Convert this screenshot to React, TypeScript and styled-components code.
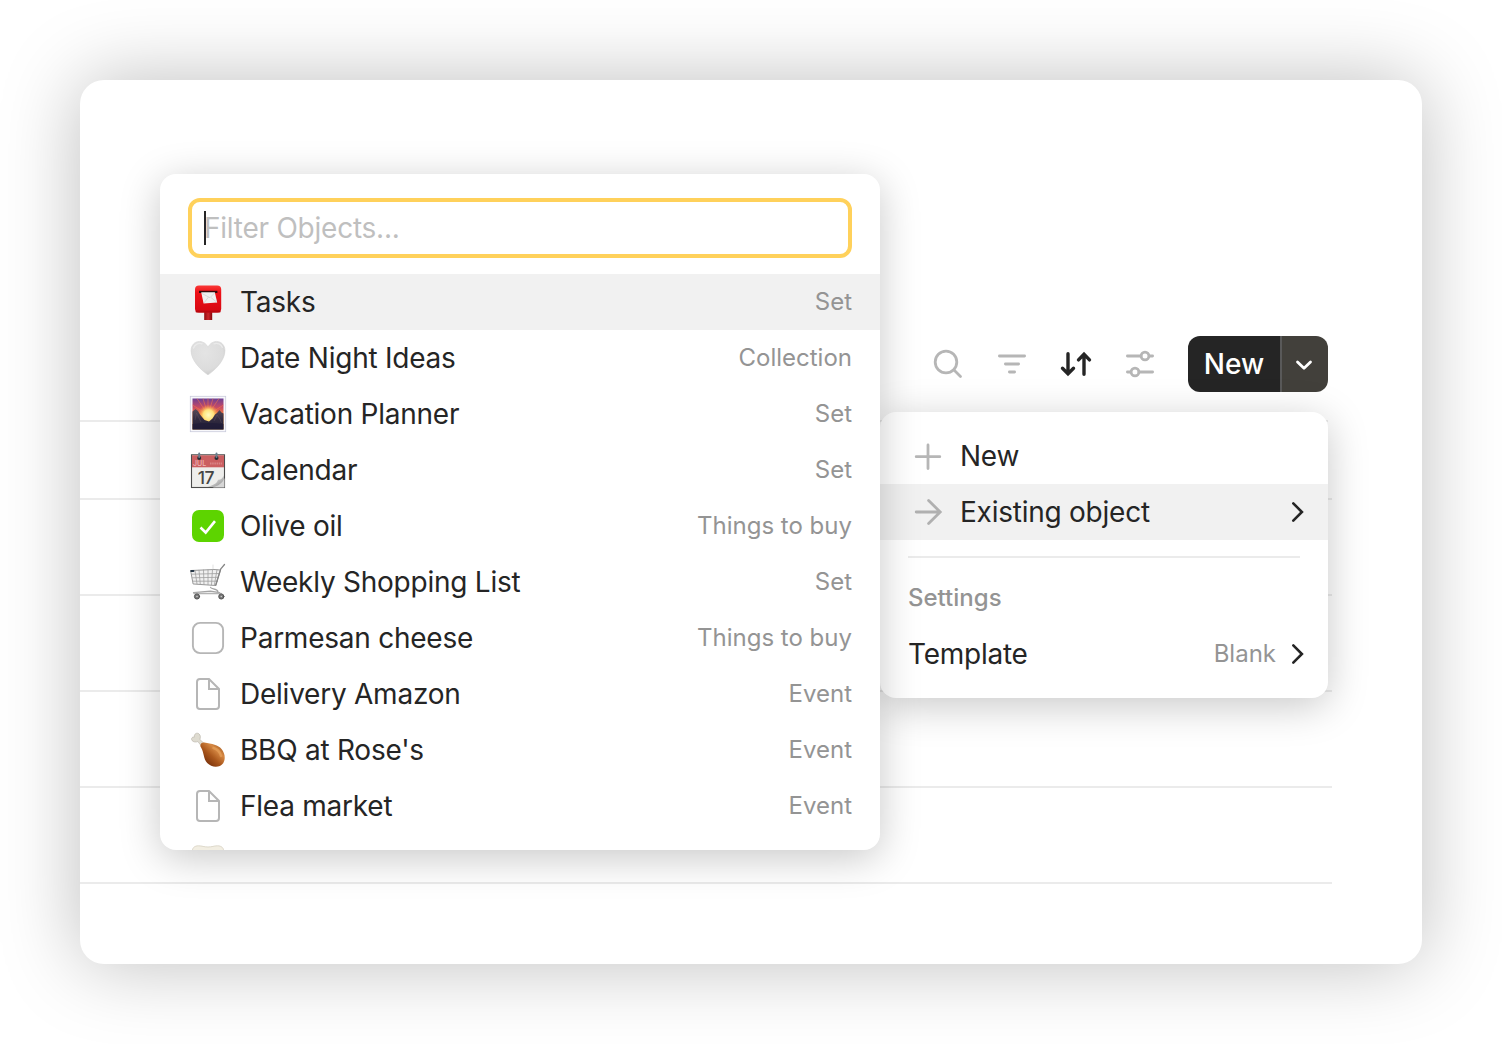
import React from 'react';
import styled, { createGlobalStyle } from 'styled-components';

const Global = createGlobalStyle`
  *, *::before, *::after { box-sizing: border-box; }
  body { margin: 0; background: #fff; }
`;

const Page = styled.div`
  height: 1044px;
  padding: 80px;
  overflow: hidden;
  font-family: Inter, "Liberation Sans", sans-serif;
  font-size: 28px;
  color: #252525;
`;

const Card = styled.main`
  position: relative;
  height: 884px;
  padding-top: 256px;
  border-radius: 24px;
  background: #fff;
  box-shadow: 0 0 80px rgba(0, 0, 0, 0.26);
`;

const Toolbar = styled.div`
  display: flex;
  justify-content: flex-end;
  align-items: center;
  height: 56px;
  padding-right: 94px;
`;

const Tools = styled.div`
  display: flex;
  gap: 24px;
  margin-right: 28px;
`;

const ToolIcon = styled.svg<{ $active?: boolean }>`
  display: block;
  width: 40px;
  height: 40px;
  fill: none;
  stroke: ${(p) => (p.$active ? '#252525' : '#b6b6b6')};
  stroke-width: ${(p) => (p.$active ? 3.4 : 2.8)};
  stroke-linecap: round;
`;

const SplitButton = styled.div`
  display: flex;
  width: 140px;
  height: 56px;
  border-radius: 12px;
  overflow: hidden;
`;

const NewButton = styled.button`
  flex: 1;
  padding: 0;
  border: 0;
  background: #252525;
  color: #fff;
  font: 500 28px/56px Inter, "Liberation Sans", sans-serif;
`;

const ArrowButton = styled.button`
  display: flex;
  align-items: center;
  justify-content: center;
  width: 48px;
  padding: 0 2px 0 0;
  border: 0;
  border-left: 2px solid #595959;
  background: #42403b;
`;

const Grid = styled.div`
  margin: 28px 90px 0 0;
`;

const GridRow = styled.div<{ $height: number; $inset?: number }>`
  height: ${(p) => p.$height}px;
  margin-right: ${(p) => p.$inset ?? 0}px;
  border-top: 2px solid #ebebeb;
`;

const Menu = styled.div`
  position: absolute;
  border-radius: 16px;
  background: #fff;
  overflow: hidden;
  box-shadow: 0 8px 40px rgba(0, 0, 0, 0.22);
`;

const NewMenu = styled(Menu)`
  top: 332px;
  left: 800px;
  width: 448px;
  height: 286px;
  padding: 16px 0;
`;

const ObjectMenu = styled(Menu)`
  top: 94px;
  left: 80px;
  width: 720px;
  height: 676px;
  padding-top: 24px;
`;

const Item = styled.div<{ $active?: boolean; $padRight?: number }>`
  display: flex;
  align-items: center;
  height: 56px;
  padding: 0 ${(p) => p.$padRight ?? 28}px 0 28px;
  background: ${(p) => (p.$active ? '#f1f1f1' : 'transparent')};
`;

const Glyph = styled.svg`
  display: block;
  flex: none;
  width: 40px;
  height: 40px;
  margin-right: 12px;
`;

const Name = styled.span`
  flex: 1;
  white-space: nowrap;
  letter-spacing: -0.24px;
`;

const Caption = styled.span`
  padding-bottom: 2px;
  font-size: 24px;
  color: #949494;
  white-space: nowrap;
`;

const Chevron = styled.svg`
  display: block;
  width: 16px;
  height: 24px;
  margin-left: 14px;
`;

const Divider = styled.div`
  height: 2px;
  margin: 16px 28px 0;
  background: #ebebeb;
`;

const Section = styled.div`
  height: 68px;
  padding: 12px 28px 0;
  font-size: 24px;
  font-weight: 500;
  line-height: 56px;
  color: #949494;
`;

const Filter = styled.div`
  display: flex;
  align-items: center;
  height: 60px;
  margin: 0 28px 16px;
  padding-left: 12px;
  border: 4px solid #ffd15b;
  border-radius: 12px;
  color: #bfbfbf;
  line-height: 34px;
  letter-spacing: -0.24px;
`;

const Caret = styled.i`
  width: 2px;
  height: 34px;
  margin-right: -2px;
  background: #252525;
`;

const Mailbox = () => (
  <>
    <defs>
      <linearGradient id="mb" x1="0" y1="0" x2="0" y2="1">
        <stop offset="0" stopColor="#f93a38" />
        <stop offset=".25" stopColor="#ee1118" />
        <stop offset="1" stopColor="#d50812" />
      </linearGradient>
      <linearGradient id="mp" x1="0" x2="1">
        <stop offset="0" stopColor="#8f0a0e" />
        <stop offset=".5" stopColor="#cb252a" />
        <stop offset="1" stopColor="#85080c" />
      </linearGradient>
    </defs>
    <path d="M16.2 28h8v10h-8z" fill="url(#mp)" />
    <rect x="7" y="3.5" width="26.2" height="27" rx="4" fill="url(#mb)" />
    <rect x="7.6" y="28.6" width="25" height="1.8" rx=".9" fill="#b8070f" />
    <path d="M11 8.8h18.4v2.2H11z" fill="#33090b" />
    <path d="M13.2 10.2h13.6l2.4 10.2-13.6 1z" fill="#f0f0f0" />
    <path d="m14 11.500 8 4.200 4.600-4.800M16 21l4.500-6m8.300 5.200-6-4.800" fill="none" stroke="#cfcfcf" strokeWidth=".7" />
  </>
);

const Heart = () => (
  <>
    <defs>
      <radialGradient id="ht" cx=".42" cy=".34" r=".68">
        <stop offset="0" stopColor="#e4e4e4" />
        <stop offset=".75" stopColor="#dcdcdc" />
        <stop offset="1" stopColor="#cbcbcb" />
      </radialGradient>
    </defs>
    <path
      d="M20 36.800C17.500 35.500 3 24.500 3 12.800 3 7.300 6.500 3.400 11.300 3.400c4 0 7.200 2.400 8.700 5.800 1.500-3.400 4.700-5.800 8.700-5.800 4.800 0 8.300 3.900 8.300 9.400C37 24.500 22.500 35.500 20 36.800z"
      fill="url(#ht)"
      stroke="#d2d2d2"
      strokeWidth=".5"
    />
    <path d="M5.500 10c1.200-3.800 5-5.400 8.500-4.200m12 0c3.500-1.200 7 .4 8.300 3.500" fill="none" stroke="#eaeaea" strokeWidth="1.400" strokeLinecap="round" />
  </>
);

const Sunrise = () => (
  <>
    <defs>
      <linearGradient id="sky" x1="0" y1="0" x2="0" y2="1">
        <stop offset="0" stopColor="#6c3f94" />
        <stop offset=".28" stopColor="#c64a66" />
        <stop offset=".55" stopColor="#fb8534" />
        <stop offset="1" stopColor="#ffb84a" />
      </linearGradient>
      <radialGradient id="sun" cx=".5" cy=".5" r=".5">
        <stop offset="0" stopColor="#fffac0" />
        <stop offset=".5" stopColor="#ffe27a" />
        <stop offset="1" stopColor="#ff9838" stopOpacity="0" />
      </radialGradient>
      <linearGradient id="mt" x1="0" y1="0" x2="0" y2="1">
        <stop offset="0" stopColor="#5a4c58" />
        <stop offset=".5" stopColor="#322b40" />
        <stop offset="1" stopColor="#211c35" />
      </linearGradient>
    </defs>
    <rect x="2.300" y="2.300" width="35.400" height="35.400" fill="#f8f8fb" stroke="#c9cbdc" strokeWidth=".8" />
    <path d="M4.500 4.500h31v31h-31z" fill="url(#sky)" />
    <path d="M20 21 9 4.500M20 21l-5-16.500M20 21V4.500M20 21l5-16.500M20 21 31 4.500M20 21 4.500 11M20 21l15.500-10" stroke="#ff7e41" strokeWidth="1" opacity=".5" />
    <circle cx="20.500" cy="21" r="10.500" fill="url(#sun)" />
    <path d="M4.500 17.500 7.500 15l2.500 2 2 3.500 2 2.500 2.500 3 4.500 1.500 3.500-3 2.500-4 2-1.500L31.500 16l2 2.500 2 1v16h-31z" fill="url(#mt)" />
    <path d="m7 26 1.500-7 2.500 5 2 4m13-1 3-6 3 4 1.500 4" fill="none" stroke="#675665" strokeWidth=".8" opacity=".5" />
    <path d="M4.500 30c9-1.500 22-1.500 31 0v5.500h-31z" fill="#201b37" opacity=".7" />
  </>
);

const CalText = styled.text`
  font-family: Inter, sans-serif;
`;

const CalendarIcon = () => (
  <>
    <defs>
      <linearGradient id="curl" x1="0" y1="0" x2="1" y2="1">
        <stop offset="0" stopColor="#525252" />
        <stop offset=".5" stopColor="#c5c5c5" />
        <stop offset="1" stopColor="#8a8a8a" />
      </linearGradient>
    </defs>
    <rect x="3.500" y="4.800" width="33" height="32.700" fill="#eeeeec" stroke="#4c4c4c" strokeWidth="1.100" />
    <path d="M4 5.300h32v12H4z" fill="#cb5f61" />
    <CalText x="5" y="16.200" fontSize="7" fontWeight="500" fill="#eeb8b8">JUL</CalText>
    <path d="M22 13.500h12" stroke="#d98486" strokeWidth="2.200" strokeDasharray="1.500 .7" />
    <path d="M19.500 37c6-1.800 9.500-3.600 10.500-7.200 2.500.4 4.200-1.200 6-4.300V37z" fill="url(#curl)" />
    <path d="M36.500 28v9.500H24.500c6-1.500 10-4.500 12-9.500z" fill="#d6d6d6" />
    <CalText x="9.800" y="33.500" fontSize="17.500" fontWeight="500" letterSpacing="-.6" fill="#454545">17</CalText>
    <circle cx="11.200" cy="8" r="2" fill="#242b31" />
    <circle cx="28.500" cy="8" r="2" fill="#242b31" />
    <path d="M11.200 3.400V7m17.300-3.600V7" stroke="#687d8c" strokeWidth="2" strokeLinecap="round" />
  </>
);

const Done = () => (
  <>
    <rect x="4" y="4" width="32" height="32" rx="7" fill="#5dd400" />
    <path d="m12.500 21.500 5.200 5 9.300-11.300" fill="none" stroke="#fff" strokeWidth="2.600" />
  </>
);

const Cart = () => (
  <g fill="none" strokeLinecap="round" strokeLinejoin="round">
    <path d="M3 8.500 26 7.500l6.500.5-5 15.500L5.500 22z" fill="#f0f0f0" stroke="#8c8c8c" strokeWidth=".9" />
    <path
      d="m3.500 12.200 28-.7M4.300 15.800l26.200-.5M5 19.200h24.500M7 8.500l2 13.300M11 8.300l1.300 14M15.500 8l.5 14.500M20 7.800v14.800M24.500 7.600l-1 15.200M29 7.600l-2.600 15.400"
      stroke="#a0a0a0"
      strokeWidth=".8"
    />
    <path d="M25 7V3" stroke="#ccc" strokeWidth=".6" />
    <path d="m36.500 2.500-3.700 4.300-5 16.500" stroke="#858585" strokeWidth="1.300" />
    <path d="M3.200 9h2.300" stroke="#253746" strokeWidth="1.800" />
    <path d="M22.500 25.300c.5 2 6.500 1 7.500 4.200M5.500 30.700l17-1.500 9 1.500" stroke="#a4a4a4" strokeWidth="1.200" />
    <path d="M6 31.500h27" stroke="#b4b4b4" strokeWidth="1.500" />
    <circle cx="9" cy="34.500" r="2.600" fill="#777" stroke="#505050" strokeWidth=".9" />
    <circle cx="33.300" cy="34.500" r="2.600" fill="#777" stroke="#505050" strokeWidth=".9" />
    <circle cx="9" cy="34.500" r=".8" fill="#ccc" />
    <circle cx="33.300" cy="34.500" r=".8" fill="#ccc" />
  </g>
);

const Todo = () => <rect x="4.900" y="4.900" width="30.200" height="30.200" rx="7.200" fill="none" stroke="#b6b6b6" strokeWidth="1.900" />;

const File = () => (
  <path
    d="M12 5h9l10 10v17a3 3 0 0 1-3 3H12a3 3 0 0 1-3-3V8a3 3 0 0 1 3-3zM21 5v10h10"
    fill="none"
    stroke="#b6b6b6"
    strokeWidth="2"
  />
);

const Drumstick = () => (
  <>
    <defs>
      <linearGradient id="leg" x1=".1" y1=".9" x2=".85" y2=".1">
        <stop offset="0" stopColor="#6b2707" />
        <stop offset=".45" stopColor="#aa571c" />
        <stop offset=".75" stopColor="#d68944" />
        <stop offset="1" stopColor="#a75c20" />
      </linearGradient>
    </defs>
    <path
      d="m12.700 15.200-2.800-3.600c-1.700.6-3.600.6-5-.3-2.500-1.700-1.300-4.800 1.500-4.200-.8-3 2.400-5 4.500-3.300 2 1.700 1.600 3.700 1 5.700l4 3.700z"
      fill="#dedbd0"
      stroke="#aaa599"
      strokeWidth=".5"
    />
    <path d="M12.500 14.800c.6-1.600 2-2.500 3.700-2.200 7.800 1.400 14 2.400 17.300 6.400 3.500 4.200 4.300 10 1.700 14.200-3.500 4.800-11.500 4.600-16-.2-4-4.500-3-10-6-15.200-.8-1-1-2-.7-3z" fill="url(#leg)" />
    <path d="M25.500 18c4 1 6.500 4 7.500 8" fill="none" stroke="#eba761" strokeWidth="2.500" strokeLinecap="round" opacity=".55" />
  </>
);

const Tooth = () => (
  <path
    d="M20 5c-4 0-6-1.200-9.500-1.200C6.500 3.800 4 6 4.500 9.500c.5 4 2.500 9 3.500 15 1 6 3 12 6 12 4 0 1.500-12 6-12s2 12 6 12c3 0 5-6 6-12 1-6 3-11 3.500-15 .5-3.500-2-5.700-6-5.700C26 3.800 24 5 20 5z"
    fill="#f2eee2"
    stroke="#ddd8ca"
    strokeWidth="1"
  />
);

const objects: { icon: React.FC; name: string; type: string }[] = [
  { icon: Mailbox, name: 'Tasks', type: 'Set' },
  { icon: Heart, name: 'Date Night Ideas', type: 'Collection' },
  { icon: Sunrise, name: 'Vacation Planner', type: 'Set' },
  { icon: CalendarIcon, name: 'Calendar', type: 'Set' },
  { icon: Done, name: 'Olive oil', type: 'Things to buy' },
  { icon: Cart, name: 'Weekly Shopping List', type: 'Set' },
  { icon: Todo, name: 'Parmesan cheese', type: 'Things to buy' },
  { icon: File, name: 'Delivery Amazon', type: 'Event' },
  { icon: Drumstick, name: "BBQ at Rose's", type: 'Event' },
  { icon: File, name: 'Flea market', type: 'Event' },
  { icon: Tooth, name: '', type: '' },
];

const More = () => (
  <Chevron viewBox="0 0 16 24" fill="none" stroke="#252525" strokeWidth="2.600" strokeLinecap="round">
    <path d="M3.300 3.300 11.900 12l-8.600 8.700" />
  </Chevron>
);

export default function App() {
  return (
    <>
      <Global />
      <Page>
        <Card>
          <Toolbar>
            <Tools>
              <ToolIcon viewBox="0 0 40 40">
                <circle cx="18" cy="18" r="10.800" />
                <path d="m26 26 6.500 6.500" />
              </ToolIcon>
              <ToolIcon viewBox="0 0 40 40">
                <path d="M7.400 12h25.200M13.400 20h13.200M17.400 28h5.200" />
              </ToolIcon>
              <ToolIcon viewBox="0 0 40 40" $active>
                <path d="M12 9.700v20M6.500 24.300l5.500 5.600 5.500-5.600M28 30.300v-20M22.500 15.900 28 10.200l5.500 5.700" />
              </ToolIcon>
              <ToolIcon viewBox="0 0 40 40">
                <path d="M7.400 12H21m8.500 0h3.100M7.400 28h3.100m8.500 0h13.600" />
                <circle cx="25" cy="12" r="3.900" />
                <circle cx="15" cy="28" r="3.900" />
              </ToolIcon>
            </Tools>
            <SplitButton>
              <NewButton>New</NewButton>
              <ArrowButton>
                <svg width="20" height="20" viewBox="0 0 20 20" fill="none" stroke="#fff" strokeWidth="2.800" strokeLinecap="round" strokeLinejoin="round">
                  <path d="m3.500 8 6.500 6.300L16.500 8" />
                </svg>
              </ArrowButton>
            </SplitButton>
          </Toolbar>
          <Grid>
            {[78, 96, 96, 96, 96, 82].map((h, i) => (
              <GridRow key={i} $height={h} $inset={i === 0 ? 4 : 0} />
            ))}
          </Grid>
          <NewMenu>
            <Item $padRight={22}>
              <Glyph viewBox="0 0 40 40" fill="none" stroke="#b6b6b6" strokeWidth="2.800" strokeLinecap="round">
                <path d="M8.200 20.700h23.600M20 8.900v23.600" />
              </Glyph>
              <Name>New</Name>
            </Item>
            <Item $active $padRight={22}>
              <Glyph viewBox="0 0 40 40" fill="none" stroke="#b0b0b0" strokeWidth="2.800" strokeLinecap="round">
                <path d="M8.200 20h23.800M20.600 8.400 32.200 20 20.600 31.600" />
              </Glyph>
              <Name>Existing object</Name>
              <More />
            </Item>
            <Divider />
            <Section>Settings</Section>
            <Item $padRight={22}>
              <Name>Template</Name>
              <Caption>Blank</Caption>
              <More />
            </Item>
          </NewMenu>
          <ObjectMenu>
            <Filter>
              <Caret />
              <span>Filter Objects...</span>
            </Filter>
            {objects.map(({ icon: Icon, name, type }, i) => (
              <Item key={i} $active={i === 0}>
                <Glyph viewBox="0 0 40 40">
                  <Icon />
                </Glyph>
                <Name>{name}</Name>
                <Caption>{type}</Caption>
              </Item>
            ))}
          </ObjectMenu>
        </Card>
      </Page>
    </>
  );
}
